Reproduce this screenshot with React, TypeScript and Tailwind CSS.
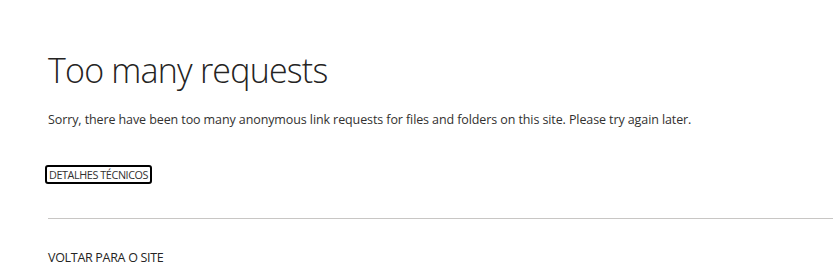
import React from 'react';

const App: React.FC = () => {
  return (
    <div className="min-h-screen bg-white pl-12 text-[#333333]" style={{ fontFamily: '"Open Sans", "Segoe UI", sans-serif' }}>
      <h1 className="pt-[46px] text-[34px] font-light leading-[48px] tracking-[-0.8px] text-[#252423]">Too many requests</h1>
      <p className="mt-[16px] text-[12.5px] leading-[20px] tracking-[-0.1px] text-[#323130]">
        Sorry, there have been too many anonymous link requests for files and folders on this site. Please try again later.
      </p>
      <div className="mt-[31px]">
        <button className="-ml-[3px] rounded-[3px] border-2 border-black px-[2px] text-[10.8px] leading-[15px] uppercase tracking-[-0.4px] text-[#323130]">
          Detalhes técnicos
        </button>
      </div>
      <hr className="mt-[33px] border-t border-[#c8c6c4]" />
      <a className="mt-[30px] block text-[12.5px] leading-[18px] uppercase tracking-[-0.3px] text-[#252423]">Voltar para o site</a>
    </div>
  );
};

export default App;
